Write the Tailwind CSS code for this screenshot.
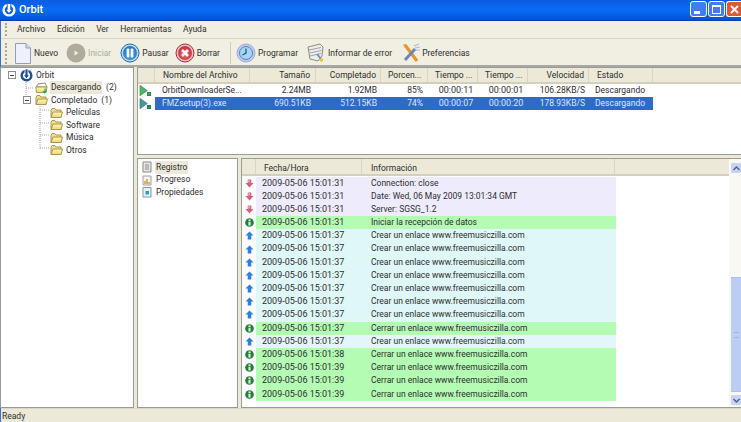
<!DOCTYPE html>
<html lang="es">

<head>
    <meta charset="UTF-8">
    <title>Orbit</title>
    <script src="https://cdn.jsdelivr.net/npm/@tailwindcss/browser@4"></script>
</head>

<body class="bg-[#ece9d8] overflow-hidden">
    <svg class="absolute w-0 h-0">
        <defs>
            <radialGradient id="g-blue" cx=".5" cy=".6" r=".6">
                <stop offset="0" stop-color="#55b4f0" />
                <stop offset="1" stop-color="#1f6fc0" />
            </radialGradient>
            <radialGradient id="g-red" cx=".5" cy=".6" r=".6">
                <stop offset="0" stop-color="#ee6a6a" />
                <stop offset="1" stop-color="#c22f3c" />
            </radialGradient>
            <linearGradient id="g-folder" x1="0" y1="0" x2="0" y2="1">
                <stop offset="0" stop-color="#fff7b8" />
                <stop offset="1" stop-color="#f3d767" />
            </linearGradient>
        </defs>
        <symbol id="folder" viewBox="0 0 13 12">
            <path d="M1 3.5 L1 10.5 L11 10.5 L11 3 L6 3 L4.8 1.5 L2 1.5 Z" fill="#f5de80" stroke="#a8955a" />
            <path d="M1 10.5 L3 5 L12.5 5 L11 10.5 Z" fill="url(#g-folder)" stroke="#a8955a" />
        </symbol>
        <symbol id="folder-dl" viewBox="0 0 13 12">
            <path d="M1 5 L3 2 L10 1 L12 5 Z" fill="#fbfbf3" stroke="#8f8f78" />
            <path d="M.8 5 H12 L11 10.5 H1.5 Z" fill="url(#g-folder)" stroke="#a8955a" />
            <path d="M9.5 6.5 V9 H7.5 L9.5 11.8 L12 9 H10.8 V6.5 Z" fill="#21b04a" />
        </symbol>
        <symbol id="run" viewBox="0 0 16 14">
            <path d="M1 .5 L1 12.5 L9.5 6.5 Z" fill="#4cb567" stroke="#2f8a4b" stroke-width=".8" />
            <rect x="9.5" y="8.5" width="4" height="4" fill="#22b14c" stroke="#0d6b2a" stroke-width=".7" />
        </symbol>
        <symbol id="run-sel" viewBox="0 0 16 14">
            <path d="M1 .5 L1 12.5 L9.5 6.5 Z" fill="#3f9c94" stroke="#2f7f78" stroke-width=".8" />
            <rect x="9.5" y="8.5" width="4" height="4" fill="#1f9450" stroke="#0d5b3a" stroke-width=".7" />
        </symbol>
        <symbol id="down" viewBox="0 0 10 10">
            <path d="M3 .5 H7 V4.5 H9.5 L5 9.5 L.5 4.5 H3 Z" fill="#d8607f" />
            <path d="M3.6 1 H5.4 V4 H3.6 Z" fill="#efa6ba" />
        </symbol>
        <symbol id="up" viewBox="0 0 10 10">
            <path d="M5 .5 L9.5 5 H7 V9.5 H3 V5 H.5 Z" fill="#2f80d8" />
        </symbol>
        <symbol id="info" viewBox="0 0 10 10">
            <circle cx="5" cy="5" r="4.8" fill="#237f3c" />
            <rect x="3.8" y="1.6" width="2.4" height="2" fill="#d8f5d8" />
            <rect x="3.8" y="4.4" width="2.4" height="4" fill="#d8f5d8" />
        </symbol>
    </svg>

    <div id="app" class="w-[741px] h-[422px] flex flex-col text-[8.5px] text-[#2e2e2e] border-l border-[#3a6fd8] font-['Roboto',sans-serif]">
        <!-- Title bar -->
        <div class="h-[21px] -ml-px shrink-0 flex items-center justify-between pl-[2px] text-white bg-linear-to-b from-[#0a5be0] via-[#0a6cf5] to-[#0052d8] border-b border-[#0a3fb0]">
            <div class="flex items-center gap-[3px]">
                <svg class="w-[14px] h-[14px]" viewBox="0 0 14 14">
                    <circle cx="7" cy="7" r="5.4" fill="none" stroke="#fff" stroke-width="2.4" />
                    <path d="M5.2 .5 H8.8 V6.5 H10.6 L7 10.6 L3.4 6.5 H5.2 Z" fill="#fff" stroke="#0a4fc8" stroke-width=".9" />
                </svg>
                <span class="text-[11px] font-medium">Orbit</span>
            </div>
            <div class="flex gap-[1px] pb-[2px]">
                <div class="w-[17px] h-[16px] rounded-[3px] border border-white bg-[#3f7df0] relative">
                    <div class="absolute left-[3px] bottom-[2px] w-[6px] h-[3px] bg-white"></div>
                </div>
                <div class="w-[17px] h-[16px] rounded-[3px] border border-white bg-[#3f7df0] flex items-center justify-center">
                    <div class="w-[9px] h-[9px] border border-white border-t-2"></div>
                </div>
                <div class="w-[15px] h-[16px] rounded-l-[3px] border border-r-0 border-white bg-[#e0582f] flex items-center justify-center">
                    <svg width="9" height="9" viewBox="0 0 9 9">
                        <path d="M1 1 L8 8 M8 1 L1 8" stroke="#fff" stroke-width="2" />
                    </svg>
                </div>
            </div>
        </div>

        <!-- Menu -->
        <div class="h-[18px] shrink-0 flex items-center pl-[4px] bg-[#f1efe2] border-b border-[#dcd8c4]">
            <div class="w-[3px] h-[13px] border-l-2 border-dotted border-[#a8a490]"></div>
            <div class="flex gap-[11.5px] pl-[9px]">
                <span>Archivo</span><span>Edición</span><span>Ver</span><span>Herramientas</span><span>Ayuda</span>
            </div>
        </div>

        <!-- Toolbar -->
        <div class="h-[28px] shrink-0 flex items-center pl-[4px] pt-[2px] bg-[#f1efe2] border-b-2 border-[#a9a9a4]">
            <div class="w-[3px] h-[21px] border-l-2 border-dotted border-[#a8a490]"></div>
            <div class="flex items-center pl-[7px]">
                <svg class="w-[16px] h-[21px]" viewBox="0 0 16 21">
                    <path d="M.5 .5 H11 L15.5 5 V20.5 H.5 Z" fill="#eef0fc" stroke="#8f9cc8" />
                    <path d="M11 .5 V5 H15.5" fill="#d5daf2" stroke="#8f9cc8" />
                </svg>
                <span class="ml-[3px]">Nuevo</span>
                <svg class="ml-[8px] w-[20px] h-[20px]" viewBox="0 0 20 20">
                    <circle cx="10" cy="10" r="9.5" fill="#b1ab9c" />
                    <path d="M8.5 7.5 L12.5 10 L8.5 12.5 Z" fill="#efeee6" />
                </svg>
                <span class="ml-[2px] text-[#aeaca2]">Iniciar</span>
                <svg class="ml-[9px] w-[20px] h-[20px]" viewBox="0 0 20 20">
                    <circle cx="10" cy="10" r="9" fill="#bcdcf3" stroke="#2468a8" />
                    <circle cx="10" cy="10" r="7" fill="url(#g-blue)" />
                    <rect x="6.7" y="5.5" width="2.5" height="9" rx=".8" fill="#fff" />
                    <rect x="10.8" y="5.5" width="2.5" height="9" rx=".8" fill="#fff" />
                </svg>
                <span class="ml-[2px]">Pausar</span>
                <svg class="ml-[6px] w-[20px] h-[20px]" viewBox="0 0 20 20">
                    <circle cx="10" cy="10" r="9" fill="#f0c0c0" stroke="#a0303a" />
                    <circle cx="10" cy="10" r="7" fill="url(#g-red)" />
                    <path d="M7 7 L13 13 M13 7 L7 13" stroke="#fff" stroke-width="2.6" />
                </svg>
                <span class="ml-[2px]">Borrar</span>
                <div class="ml-[10px] w-px h-[22px] bg-[#cfccb8]"></div>
                <svg class="ml-[5px] w-[20px] h-[20px]" viewBox="0 0 20 20">
                    <circle cx="10" cy="10" r="9" fill="#c6c9ee" stroke="#a2a6d8" />
                    <circle cx="10" cy="10" r="6.5" fill="#a9d4f2" stroke="#4a86c6" />
                    <path d="M10 5.5 V10 L6.5 12" fill="none" stroke="#27568f" stroke-width="1.3" />
                </svg>
                <span class="ml-[2px]">Programar</span>
                <svg class="ml-[9px] w-[18px] h-[20px]" viewBox="0 0 18 20">
                    <path d="M1 4 L13 1 L16 4 L15 13 L11 18 L3 16 Z" fill="#eeeee6" stroke="#8c8c88" />
                    <path d="M2 7 L14 4.5 M2.5 10 L14.5 7.5 M3 13 L14 10.5" stroke="#a0a0b4" />
                    <path d="M10 11 L14 16" stroke="#7c8cc4" stroke-width="2" />
                    <circle cx="14.5" cy="17" r="1.8" fill="#e8c63a" />
                </svg>
                <span class="ml-[3px]">Informar de error</span>
                <svg class="ml-[10px] w-[18px] h-[20px]" viewBox="0 0 18 20">
                    <path d="M3 2 L15 18" stroke="#e8961f" stroke-width="3.2" />
                    <path d="M1 1 L5 2 L3 5 Z" fill="#e8961f" />
                    <path d="M13 6 L3 17" stroke="#6f83b8" stroke-width="3" />
                    <path d="M12 3 L17 1 M13 5 L18 4 M14 7 L18 7" stroke="#a9b8d8" stroke-width="1.1" />
                </svg>
                <span class="ml-[2px]">Preferencias</span>
            </div>
        </div>

        <!-- Main area -->
        <div class="flex-1 min-h-0 flex gap-[3px] -ml-px">
            <!-- Tree -->
            <div class="w-[134px] shrink-0 bg-white border border-[#9a9a96] relative pt-[1px] pl-[7px]">
                <svg class="absolute left-0 top-0" width="70" height="90">
                    <path d="M25 12 V32 M25 20 H33 M39 36 V81 M39 42 H49 M39 55 H49 M39 67 H49 M39 80 H49" stroke="#a5a5a5" stroke-dasharray="1 1" fill="none" />
                </svg>
                <div class="relative flex items-center h-[12.5px]">
                    <span class="w-[8px] h-[8px] border border-[#8d8d8d] bg-white flex items-center justify-center"><span class="w-[4px] h-px bg-[#444]"></span></span>
                    <svg class="w-[13px] h-[13px] ml-[4px]" viewBox="0 0 14 14">
                        <circle cx="7" cy="7" r="5.2" fill="none" stroke="#1b4f96" stroke-width="2.6" />
                        <path d="M5.4 0 H8.6 V6.5 H10.4 L7 10.5 L3.6 6.5 H5.4 Z" fill="#1b4f96" stroke="#fff" stroke-width=".9" />
                    </svg>
                    <span class="ml-[3px]">Orbit</span>
                </div>
                <div class="relative flex items-center h-[12.5px] pl-[27px]">
                    <svg class="w-[13px] h-[12px]"><use href="#folder-dl" /></svg>
                    <span class="ml-[2px] bg-[#ece9d8] px-px">Descargando</span><span class="ml-[4px]">(2)</span>
                </div>
                <div class="relative flex items-center h-[12.5px] pl-[15px]">
                    <span class="w-[8px] h-[8px] border border-[#8d8d8d] bg-white flex items-center justify-center"><span class="w-[4px] h-px bg-[#444]"></span></span>
                    <svg class="w-[13px] h-[12px] ml-[4px]"><use href="#folder" /></svg>
                    <span class="ml-[3px]">Completado</span><span class="ml-[4px]">(1)</span>
                </div>
                <div id="tree-sub"></div>
            </div>

            <!-- Right side -->
            <div class="flex-1 min-w-0 flex flex-col gap-[3px]">
                <!-- Download list -->
                <div class="h-[88px] shrink-0 bg-white border border-[#9a9a96] border-r-0">
                    <div class="h-[16px] flex bg-[#ece9d8] border-b-2 border-[#d2cfba]" id="list-head"></div>
                    <div id="list-body"></div>
                </div>
                <!-- Bottom pane -->
                <div class="flex-1 min-h-0 flex gap-[3px]">
                    <div class="w-[101px] shrink-0 bg-white border border-[#9a9a96] pt-[2px] pl-[3px]">
                        <div class="flex items-center h-[12.5px]">
                            <svg class="w-[12px] h-[12px]" viewBox="0 0 12 12">
                                <path d="M2 1 H10 V11 H2 Z" fill="#e6e6e6" stroke="#8a8a8a" />
                                <path d="M4 4 H8 M4 6 H8 M4 8 H8" stroke="#8a8a8a" />
                            </svg>
                            <span class="ml-[2px] bg-[#ece9d8] px-px">Registro</span>
                        </div>
                        <div class="flex items-center h-[12.5px]">
                            <svg class="w-[12px] h-[12px]" viewBox="0 0 12 12">
                                <path d="M2 2 H10 V11 H2 Z" fill="#f4f4ee" stroke="#a0a0a0" />
                                <path d="M4 10 V7 M6 10 V5 M8 10 V8" stroke="#d9922e" stroke-width="1.4" />
                            </svg>
                            <span class="ml-[3px]">Progreso</span>
                        </div>
                        <div class="flex items-center h-[12.5px]">
                            <svg class="w-[12px] h-[12px]" viewBox="0 0 12 12">
                                <path d="M2 1.5 H10 V11 H2 Z" fill="#e8f2f4" stroke="#7c9aa8" />
                                <rect x="4.5" y="5" width="3.5" height="3.5" fill="#2d9bc0" />
                            </svg>
                            <span class="ml-[3px]">Propiedades</span>
                        </div>
                    </div>
                    <div class="flex-1 min-w-0 bg-white border border-[#9a9a96] border-r-0 flex">
                        <div class="flex-1 min-w-0 flex flex-col">
                            <div class="h-[17px] shrink-0 flex bg-[#ece9d8] border-b-2 border-[#d2cfba]">
                                <div class="w-[14px] border-r border-[#d8d5c2]"></div>
                                <div class="w-[106px] pl-[8px] border-r border-[#d8d5c2] leading-[18px]">Fecha/Hora</div>
                                <div class="w-[253px] pl-[9px] border-r border-[#d8d5c2] leading-[18px]">Información</div>
                            </div>
                            <div id="log-body" class="pt-[0.5px]"></div>
                        </div>
                        <!-- Scrollbar -->
                        <div class="w-[12px] shrink-0 flex flex-col pl-[2px] pt-[4px] pb-[2px] bg-[#f9f8f3]">
                            <div class="h-[10px] shrink-0 rounded-[1px] bg-[#c5d3f5] flex items-center justify-center">
                                <svg width="7" height="5" viewBox="0 0 7 5"><path d="M.5 4 L3.5 1 L6.5 4" fill="none" stroke="#4d6185" stroke-width="1.4" /></svg>
                            </div>
                            <div class="h-[104px] shrink-0"></div>
                            <div class="flex-1 bg-[#bccdf4] border-y border-[#aebfe8] flex items-center justify-center">
                                <div class="w-[5px] h-[6px] border-y border-[#a3b5e0]"></div>
                            </div>
                            <div class="h-[10px] shrink-0 mt-[3px] rounded-[1px] bg-[#c5d3f5] flex items-center justify-center">
                                <svg width="7" height="5" viewBox="0 0 7 5"><path d="M.5 1 L3.5 4 L6.5 1" fill="none" stroke="#4d6185" stroke-width="1.4" /></svg>
                            </div>
                        </div>
                    </div>
                </div>
            </div>
        </div>

        <!-- Status bar -->
        <div class="h-[14px] shrink-0 pl-[1px] leading-[14px] border-t border-[#dcd8c4]">Ready</div>
    </div>

    <script>
        document.getElementById("tree-sub").innerHTML = ["Películas", "Software", "Música", "Otros"].map(name => `
            <div class="relative flex items-center h-[12.5px] pl-[42px]">
                <svg class="w-[13px] h-[12px]"><use href="#folder" /></svg>
                <span class="ml-[3px]">${name}</span>
            </div>
        `).join("");

        // width, label, alignment
        const listCols = [
            [17, "", "text-left"], [95, "Nombre del Archivo", "text-left pl-[8px]"], [66, "Tamaño", "text-right pr-[5px]"],
            [65, "Completado", "text-right pr-[4px]"], [47, "Porcen...", "text-left pl-[7px]"], [50, "Tiempo ...", "text-left pl-[7px]"],
            [50, "Tiempo ...", "text-left pl-[7px]"], [61, "Velocidad", "text-right pr-[4px]"], [64, "Estado", "text-left pl-[8px]"]
        ];
        document.getElementById("list-head").innerHTML = listCols.map(c => `
            <div class="${c[2]} border-r border-[#d8d5c2] leading-[14px] whitespace-nowrap" style="width:${c[0]}px">${c[1]}</div>
        `).join("");

        const listRows = [
            ["OrbitDownloaderSe...", "2.24MB", "1.92MB", "85%", "00:00:11", "00:00:01", "106.28KB/S", "Descargando"],
            ["FMZsetup(3).exe", "690.51KB", "512.15KB", "74%", "00:00:07", "00:00:20", "178.93KB/S", "Descargando"]
        ];
        const listAligns = ["text-left pl-[7px]", "text-right pr-[5px]", "text-right pr-[4px]", "text-right pr-[5px]", "text-center pl-[6px] text-[9px]", "text-center pl-[6px] text-[9px]", "text-right pr-[4px]", "text-left pl-[6px]"];
        document.getElementById("list-body").innerHTML = listRows.map((row, r) => `
            <div class="h-[13px] flex leading-[13px]">
                <div class="w-[17px] shrink-0 pl-[1px] flex items-center"><svg class="w-[14px] h-[12px]"><use href="#${r == 1 ? "run-sel" : "run"}" /></svg></div>
                <div class="flex ${r == 1 ? "bg-[#316ac5] text-[#d8e8fa]" : ""}">
                    ${row.map((cell, i) => `<div class="${listAligns[i]} whitespace-nowrap" style="width:${listCols[i + 1][0]}px">${cell}</div>`).join("")}
                </div>
            </div>
        `).join("");

        const conn = [["down", "31", "Connection: close"], ["down", "31", "Date: Wed, 06 May 2009 13:01:34 GMT"], ["down", "31", "Server: SGSG_1.2"], ["info", "31", "Iniciar la recepción de datos"]];
        const open = s => ["up", s, "Crear un enlace www.freemusiczilla.com"];
        const close = s => ["info", s, "Cerrar un enlace www.freemusiczilla.com"];
        const logRows = [...conn, open("37"), open("37"), open("37"), open("37"), open("37"), open("37"), open("37"), close("37"), open("37"), close("38"), close("39"), close("39"), close("39")];
        const rowBg = { down: "bg-[#eeecfc]", up: "bg-[#dff7f7]", info: "bg-[#b4fcb4]" };
        document.getElementById("log-body").innerHTML = logRows.map((row, i) => {
            const bg = i == 12 ? "bg-[#e4f6fb]" : rowBg[row[0]];
            return `
            <div class="h-[13.2px] flex leading-[13.2px]">
                <div class="w-[14px] shrink-0 flex items-center pl-[3px]"><svg class="w-[9px] h-[9px]"><use href="#${row[0]}" /></svg></div>
                <div class="w-[360px] shrink-0 flex ${bg}">
                    <div class="w-[106px] pl-[6px] text-[9px]">2009-05-06 15:01:${row[1]}</div>
                    <div class="pl-[9px] whitespace-nowrap">${row[2]}</div>
                </div>
            </div>`;
        }).join("");
    </script>
</body>

</html>
